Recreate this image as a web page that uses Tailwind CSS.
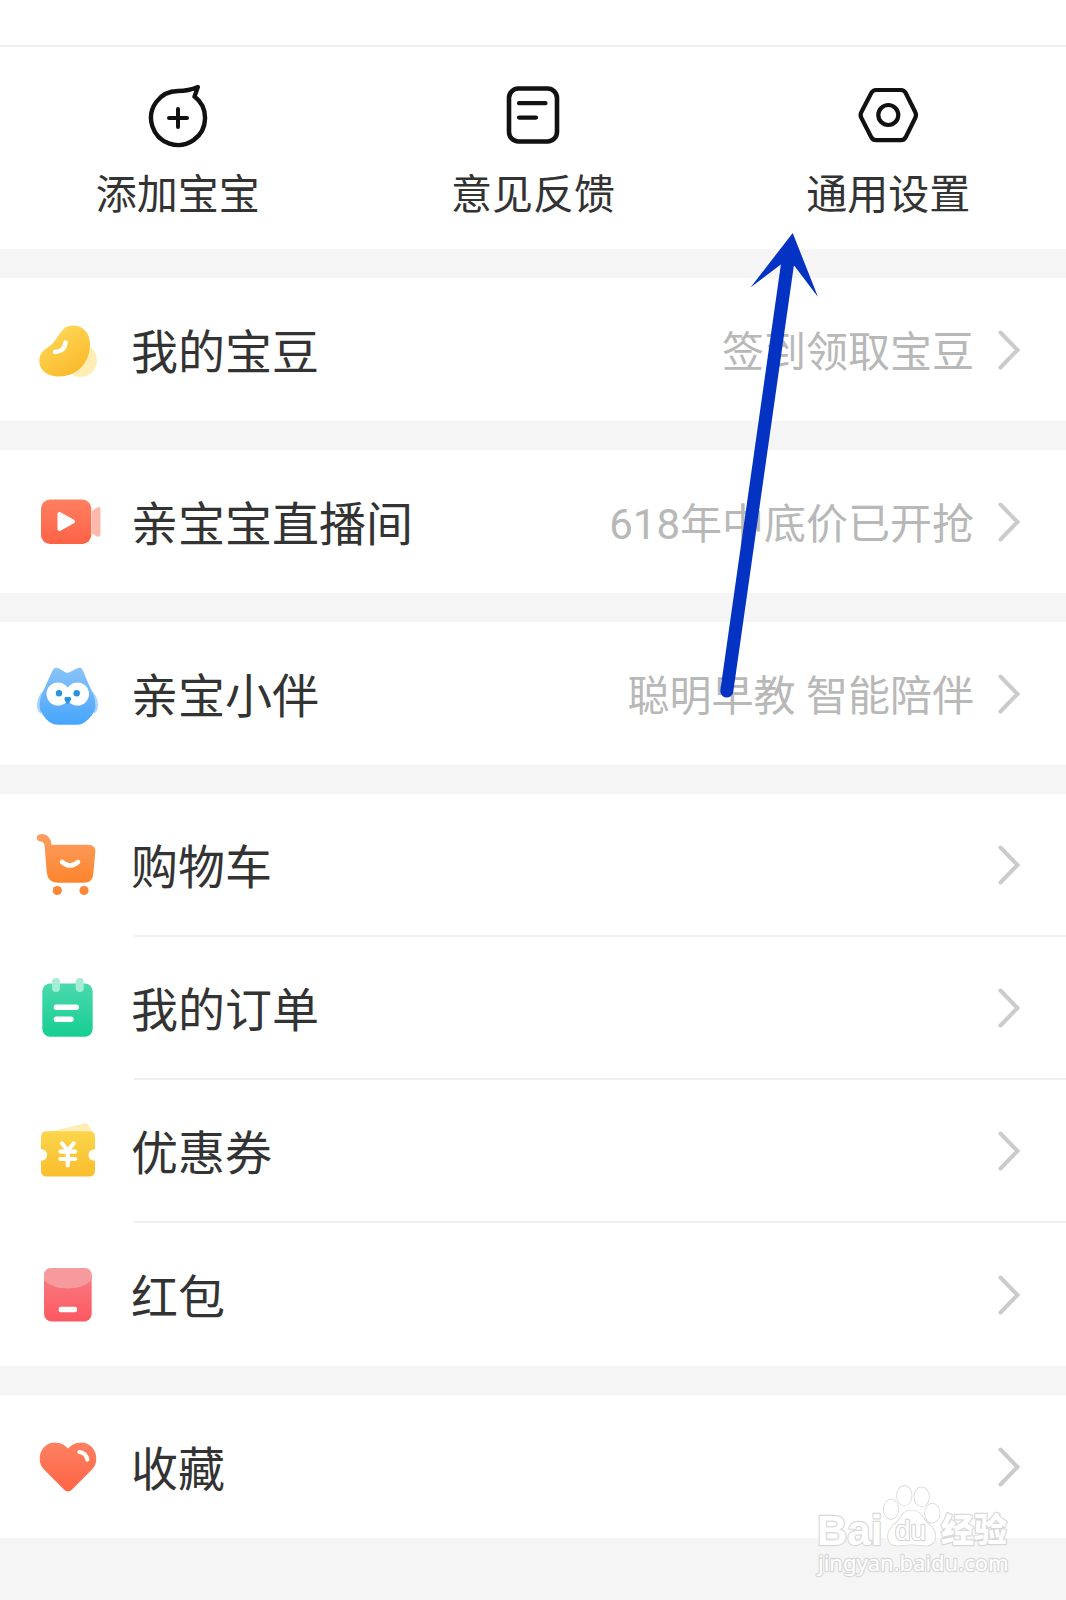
<!DOCTYPE html>
<html lang="zh-CN">
<head>
  <meta charset="UTF-8">
  <meta name="viewport" content="width=device-width, initial-scale=1.0">
  <title>我的</title>
  <script src="https://cdn.jsdelivr.net/npm/@tailwindcss/browser@4"></script>
</head>
<body class="relative min-h-screen bg-[#f5f5f5] font-[Roboto,'Noto_Sans_CJK_SC',sans-serif] text-[#333]">
  <!-- Shared shapes -->
  <svg class="hidden">
    <symbol id="chevron" viewBox="0 0 22 40">
      <path d="M2.5 2.5 19.5 20 2.5 37.5" fill="none" stroke="#cbcbcb" stroke-width="4" stroke-linecap="round" stroke-linejoin="miter"/>
    </symbol>
  </svg>

  <header class="h-[47px] border-b-2 border-[#efefef] bg-white"></header>

  <!-- Quick actions -->
  <nav class="grid grid-cols-3 bg-white pt-[37px] pb-[30px] text-[41px] leading-12">
    <a href="#add" class="flex flex-col items-center gap-[23px]">
      <svg class="size-16" viewBox="0 0 64 64" fill="none" stroke="#111" stroke-width="4.4" stroke-linecap="round" stroke-linejoin="round">
        <path d="M48.5 12.6 51.8 3 C45 6 40 7 32 7 A27 27 0 1 0 48.5 12.6Z"/>
        <path d="M32 25v18M23 34h18" stroke-width="4"/>
      </svg>
      <span>添加宝宝</span>
    </a>
    <a href="#feedback" class="flex flex-col items-center gap-[23px]">
      <svg class="size-16" viewBox="0 0 64 64" fill="none" stroke="#111" stroke-linecap="round">
        <rect x="8" y="4.5" width="48" height="53" rx="9.5" stroke-width="4.6"/>
        <path d="M18 19.2h26.5M18 33.6h17" stroke-width="4.2"/>
      </svg>
      <span>意见反馈</span>
    </a>
    <a href="#settings" class="flex flex-col items-center gap-[23px]">
      <svg class="size-16" viewBox="0 0 64 64" fill="none" stroke="#111" stroke-width="4.2">
        <path d="M20 6H45Q48 6 49.6 8.8L59.2 28Q60.8 31 59.2 34L49.6 53.4Q48 56.2 45 56.2H20Q17 56.2 15.4 53.4L5.4 34Q3.8 31 5.4 28L15.4 8.8Q17 6 20 6Z"/>
        <circle cx="32.3" cy="31" r="10"/>
      </svg>
      <span>通用设置</span>
    </a>
  </nav>

  <main class="mt-[29px] flex flex-col gap-[29px] text-[47px] leading-none">
    <!-- Beans -->
    <section class="bg-white">
      <a href="#beans" class="flex h-[143px] items-center pr-[46px] pl-[35px]">
        <svg class="size-16" viewBox="0 0 64 64">
          <defs>
            <linearGradient id="bean" x1="0" y1="0" x2="0.6" y2="1"><stop offset="0" stop-color="#fddd5e"/><stop offset="1" stop-color="#fbba2c"/></linearGradient>
          </defs>
          <circle cx="45.5" cy="42.5" r="16.5" fill="#ffedb5"/>
          <path d="M38 7.5C48 7.5 55 15 55 26C55 44 43 58.5 24 58.5C12 58.5 4.3 52 4.3 43C4.3 34 10 31.5 16 27C24 20 26 7.5 38 7.5Z" fill="url(#bean)"/>
          <path d="M30.5 24.5Q29.5 33.5 20 34" fill="none" stroke="#fff" stroke-width="4.5" stroke-linecap="round"/>
        </svg>
        <span class="ml-8 flex-1 pt-1.5">我的宝豆</span>
        <span class="mr-6 pt-1.5 text-[42px] text-[#b8b8b8]">签到领取宝豆</span>
        <svg class="h-10 w-[22px]"><use href="#chevron"/></svg>
      </a>
    </section>

    <!-- Live room -->
    <section class="bg-white">
      <a href="#live" class="flex h-[143px] items-center pr-[46px] pl-[35px]">
        <svg class="size-16 overflow-visible" viewBox="0 0 64 64">
          <defs>
            <linearGradient id="live" x1="0" y1="0" x2="0" y2="1"><stop offset="0" stop-color="#ff7f62"/><stop offset="1" stop-color="#fd6245"/></linearGradient>
          </defs>
          <path d="M57 21L62 17.5Q65.5 16 65.5 19V44Q65.5 47.5 62 46.5L57 43.5Z" fill="#ffb9aa"/>
          <rect x="6" y="9.5" width="50.3" height="44.5" rx="9" fill="url(#live)"/>
          <path d="M24.5 24L38 31.5 24.5 39Z" fill="#fff" stroke="#fff" stroke-width="4" stroke-linejoin="round"/>
        </svg>
        <span class="ml-8 flex-1 pt-1.5">亲宝宝直播间</span>
        <span class="mr-6 pt-1.5 text-[42px] text-[#b8b8b8]">618年中底价已开抢</span>
        <svg class="h-10 w-[22px]"><use href="#chevron"/></svg>
      </a>
    </section>

    <!-- Companion -->
    <section class="bg-white">
      <a href="#companion" class="flex h-[143px] items-center pr-[46px] pl-[35px]">
        <svg class="size-16" viewBox="0 0 64 64">
          <defs>
            <linearGradient id="owl" x1="0" y1="0" x2="0" y2="1"><stop offset="0" stop-color="#8ac3f8"/><stop offset="1" stop-color="#45a5fd"/></linearGradient>
          </defs>
          <path d="M10 27Q2 34 2 43Q2 49 6 52ZM55 27Q63 34 63 43Q63 49 59 52Z" fill="#a9d5fc"/>
          <path d="M19 6.5Q21 5 24 6.5L30 10Q32.5 11.5 35 10L41.5 6.5Q45 5 47 7Q49 10 50.5 15L58.5 33Q63 46 57 53Q50 62.8 42 62.8H23Q14 62.8 8 53Q2 46 6.5 33L15 14Q17 8.5 19 6.5Z" fill="url(#owl)"/>
          <circle cx="23" cy="32" r="11.5" fill="#fff"/>
          <circle cx="42.5" cy="32" r="11.5" fill="#fff"/>
          <circle cx="24" cy="31.3" r="3.2" fill="#2a93e0"/>
          <circle cx="41.7" cy="31.3" r="3.2" fill="#2a93e0"/>
          <path d="M29.5 36Q31 34 32.7 35.3Q34.5 34 36 36Q36.5 37.5 34 41Q32.7 42.5 31.5 41Q29 37.5 29.5 36Z" fill="#2a93e0"/>
        </svg>
        <span class="ml-8 flex-1 pt-1.5">亲宝小伴</span>
        <span class="mr-6 pt-1.5 text-[42px] text-[#b8b8b8]">聪明早教 智能陪伴</span>
        <svg class="h-10 w-[22px]"><use href="#chevron"/></svg>
      </a>
    </section>

    <!-- Shopping -->
    <section class="bg-white">
      <a href="#cart" class="flex h-[141px] items-center pr-[46px] pl-[35px]">
        <svg class="size-16" viewBox="0 0 64 64">
          <defs>
            <linearGradient id="cart" x1="0" y1="0" x2="0" y2="1"><stop offset="0" stop-color="#fb9f61"/><stop offset="1" stop-color="#fd842d"/></linearGradient>
          </defs>
          <path d="M5.5 1.2C11 .5 16 4 16.5 11.8H53Q61 12 60.3 19L58.3 41Q57.5 49.8 49 49.8H23Q12.5 49.8 11.7 39L9.6 13Q9 8.5 5.5 8.5A3.6 3.6 0 0 1 5.5 1.2Z" fill="url(#cart)"/>
          <circle cx="22.3" cy="57.5" r="4.6" fill="#fb8637"/>
          <circle cx="49" cy="57.5" r="4.6" fill="#fb8637"/>
          <path d="M27 29Q35 36 43 29" fill="none" stroke="#fff" stroke-width="4.5" stroke-linecap="round"/>
        </svg>
        <span class="ml-8 flex-1 pt-1.5">购物车</span>
        <svg class="h-10 w-[22px]"><use href="#chevron"/></svg>
      </a>
      <hr class="ml-[134px] border-t-2 border-[#efefef]">
      <a href="#orders" class="flex h-[141px] items-center pr-[46px] pl-[35px]">
        <svg class="size-16" viewBox="0 0 64 64">
          <defs>
            <linearGradient id="order" x1="0" y1="0" x2="0" y2="1"><stop offset="0" stop-color="#4ad9ae"/><stop offset="1" stop-color="#16ce92"/></linearGradient>
          </defs>
          <rect x="7.3" y="7.5" width="50.4" height="53.3" rx="8" fill="url(#order)"/>
          <rect x="17" y="2" width="8" height="14" rx="4" fill="#a5edd4"/>
          <rect x="40.7" y="2" width="8" height="14" rx="4" fill="#a5edd4"/>
          <path d="M21.4 31.2H41.3M21.4 43.2H36" stroke="#fff" stroke-width="5.4" stroke-linecap="round"/>
        </svg>
        <span class="ml-8 flex-1 pt-1.5">我的订单</span>
        <svg class="h-10 w-[22px]"><use href="#chevron"/></svg>
      </a>
      <hr class="ml-[134px] border-t-2 border-[#efefef]">
      <a href="#coupons" class="flex h-[141px] items-center pr-[46px] pl-[35px]">
        <svg class="size-16" viewBox="0 0 64 64">
          <defs>
            <linearGradient id="coupon" x1="0" y1="0" x2="0" y2="1"><stop offset="0" stop-color="#fbd54c"/><stop offset="1" stop-color="#fabd2c"/></linearGradient>
          </defs>
          <path d="M14 13 49 4.5Q52.5 3.5 53.8 6.5L57 13Z" fill="#ffedb5"/>
          <path d="M12 12.3H54.5Q60 12.3 60 18V30.3Q53.5 30.5 53.5 36Q53.5 41.5 60 41.7V51.5Q60 57.5 54 57.5H12Q6 57.5 6 51.5V41.7Q12 41.5 12 36Q12 30.5 6 30.3V18Q6 12.3 12 12.3Z" fill="url(#coupon)"/>
          <path d="M27 24.500 32.800 31.500 38.600 24.500M25.500 32.600H40.100M25.500 40H40.100M32.800 32V46.500" fill="none" stroke="#fff" stroke-width="4.2" stroke-linecap="round"/>
        </svg>
        <span class="ml-8 flex-1 pt-1.5">优惠券</span>
        <svg class="h-10 w-[22px]"><use href="#chevron"/></svg>
      </a>
      <hr class="ml-[134px] border-t-2 border-[#efefef]">
      <a href="#packets" class="flex h-[143px] items-center pr-[46px] pl-[35px]">
        <svg class="size-16" viewBox="0 0 64 64">
          <defs>
            <linearGradient id="packet" x1="0" y1="0" x2="0" y2="1"><stop offset="0" stop-color="#f88086"/><stop offset="1" stop-color="#fd5761"/></linearGradient>
          </defs>
          <rect x="9" y="5" width="47.7" height="53.5" rx="8" fill="url(#packet)"/>
          <path d="M17 5H48.7Q56.7 5 56.7 13V17.5Q47 25.5 32.8 25.5Q18.5 25.5 9 17.5V13Q9 5 17 5Z" fill="#f69a9e"/>
          <rect x="23.7" y="43.8" width="18.3" height="5.5" rx="2" fill="#fff"/>
        </svg>
        <span class="ml-8 flex-1 pt-1.5">红包</span>
        <svg class="h-10 w-[22px]"><use href="#chevron"/></svg>
      </a>
    </section>

    <!-- Favourites -->
    <section class="bg-white">
      <a href="#favourites" class="flex h-[143px] items-center pr-[46px] pl-[35px]">
        <svg class="size-16" viewBox="0 0 64 64">
          <defs>
            <linearGradient id="heart" x1="0" y1="0" x2="0" y2="1"><stop offset="0" stop-color="#fd8062"/><stop offset="1" stop-color="#fe6444"/></linearGradient>
          </defs>
          <path d="M33 13.5Q38 7.5 46 7.5C55 7.5 61.3 14.5 61.3 23.5Q61.3 30 57 34.5L37 54.5Q33 58.5 29 54.5L9 34.5Q4.7 30 4.7 23.5C4.7 14.5 11 7.5 20 7.5Q28 7.5 33 13.5Z" fill="url(#heart)"/>
          <path d="M44.5 17Q51 18 52.3 24.5" fill="none" stroke="#fff" stroke-width="4.2" stroke-linecap="round"/>
        </svg>
        <span class="ml-8 flex-1 pt-1.5">收藏</span>
        <svg class="h-10 w-[22px]"><use href="#chevron"/></svg>
      </a>
    </section>
  </main>

  <!-- Pointer to the settings entry -->
  <svg class="pointer-events-none absolute top-[230px] right-[246px] h-[470px] w-[102px]" viewBox="718 230 102 470">
    <path d="M787.8 262 726.8 691" stroke="#0433c4" stroke-width="13" stroke-linecap="round"/>
    <path d="M792.7 233 818 297 794.5 266 781.5 264 750.5 287.5Z" fill="#0433c4"/>
  </svg>

  <!-- Watermark -->
  <svg class="pointer-events-none absolute top-[1482px] right-[54px] h-[98px] w-[197px]" viewBox="0 0 197 98" fill="#fff" stroke="#d8d8d8" stroke-width="2.4" stroke-linejoin="round" paint-order="stroke">
    <text x="2" y="63" font-family="Liberation Sans" font-weight="700" font-size="42">Bai</text>
    <g stroke-width="1.6">
      <ellipse cx="76" cy="27.3" rx="7.3" ry="9.8"/>
      <ellipse cx="89.3" cy="13.7" rx="7.3" ry="9.8"/>
      <ellipse cx="106.7" cy="14.7" rx="7.3" ry="9.5"/>
      <ellipse cx="117.3" cy="31.3" rx="7.3" ry="9.5"/>
      <path d="M96.5 28.5C107 28.5 108 38 114.5 43C124 51 121 63.5 111 63.5C105 63.5 102 62.5 96.5 62.5C91 62.5 88 63.5 82 63.5C72 63.5 69.5 51 79 43C86 38 86 28.5 96.5 28.5Z"/>
    </g>
    <text x="80" y="58" font-family="Liberation Sans" font-size="28">du</text>
    <text x="126" y="60" font-family="Noto Sans CJK SC" font-weight="900" font-size="33">经验</text>
    <text x="3" y="89" font-family="Noto Sans" font-size="22">jingyan.baidu.com</text>
  </svg>
</body>
</html>
